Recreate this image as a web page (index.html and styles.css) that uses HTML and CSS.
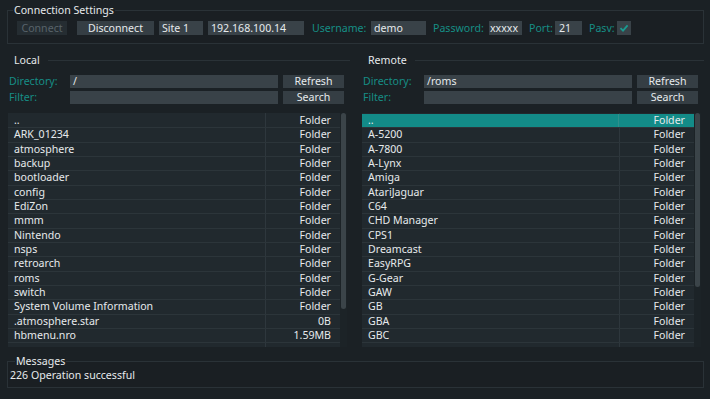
FILE: index.html
```html
<!DOCTYPE html>
<html lang="en">
<head>
    <meta charset="UTF-8">
    <meta name="viewport" content="width=device-width, initial-scale=1.0">
    <title>FTP Client</title>
    <link rel="stylesheet" href="styles.css">
</head>
<body>
    <fieldset class="group conn">
        <legend>Connection Settings</legend>
        <div class="conn-row">
            <button class="btn btn-off w-connect">Connect</button>
            <button class="btn w-disconnect">Disconnect</button>
            <div class="field w-site">Site 1</div>
            <div class="field w-host">192.168.100.14</div>
            <span class="label l-user">Username:</span>
            <div class="field w-user">demo</div>
            <span class="label l-pass">Password:</span>
            <div class="field w-pass">xxxxx</div>
            <span class="label l-port">Port:</span>
            <div class="field w-port">21</div>
            <span class="label l-pasv">Pasv:</span>
            <div class="check">
                <svg width="10" height="10" viewBox="0 0 10 10"><path d="M1.5 5.2 L4 7.6 L8.6 2.4" fill="none" stroke="#1a9a90" stroke-width="1.8"/></svg>
            </div>
        </div>
    </fieldset>

    <div class="panes">
        <div class="pane">
            <div class="pane-title"><span>Local</span></div>
            <div class="path-row">
                <span class="label">Directory:</span>
                <div class="field">/</div>
                <button class="btn">Refresh</button>
            </div>
            <div class="path-row">
                <span class="label">Filter:</span>
                <div class="field"></div>
                <button class="btn">Search</button>
            </div>
            <div class="list">
                <div class="rows" id="localRows"></div>
                <div class="scroll"><div class="grab grab-local"></div></div>
            </div>
        </div>
        <div class="pane">
            <div class="pane-title"><span>Remote</span></div>
            <div class="path-row">
                <span class="label">Directory:</span>
                <div class="field">/roms</div>
                <button class="btn">Refresh</button>
            </div>
            <div class="path-row">
                <span class="label">Filter:</span>
                <div class="field"></div>
                <button class="btn">Search</button>
            </div>
            <div class="list">
                <div class="rows" id="remoteRows"></div>
                <div class="scroll"><div class="grab grab-remote"></div></div>
            </div>
        </div>
    </div>

    <fieldset class="group messages">
        <legend>Messages</legend>
        <div class="msg">226 Operation successful</div>
    </fieldset>

    <script>
        const localFiles = [
            ["..", "Folder"], ["ARK_01234", "Folder"], ["atmosphere", "Folder"], ["backup", "Folder"],
            ["bootloader", "Folder"], ["config", "Folder"], ["EdiZon", "Folder"], ["mmm", "Folder"],
            ["Nintendo", "Folder"], ["nsps", "Folder"], ["retroarch", "Folder"], ["roms", "Folder"],
            ["switch", "Folder"], ["System Volume Information", "Folder"], [".atmosphere.star", "0B"],
            ["hbmenu.nro", "1.59MB"]
        ];
        const remoteFiles = [
            ["..", "Folder"], ["A-5200", "Folder"], ["A-7800", "Folder"], ["A-Lynx", "Folder"],
            ["Amiga", "Folder"], ["AtariJaguar", "Folder"], ["C64", "Folder"], ["CHD Manager", "Folder"],
            ["CPS1", "Folder"], ["Dreamcast", "Folder"], ["EasyRPG", "Folder"], ["G-Gear", "Folder"],
            ["GAW", "Folder"], ["GB", "Folder"], ["GBA", "Folder"], ["GBC", "Folder"]
        ];

        function fillRows(id, files, selected) {
            const box = document.getElementById(id);
            files.forEach((f, i) => {
                const row = document.createElement("div");
                row.classList.add("row");
                if (i === selected) row.classList.add("selected");
                row.innerHTML = `<span class="name">${f[0]}</span><span class="size">${f[1]}</span>`;
                box.appendChild(row);
            });
        }

        fillRows("localRows", localFiles, -1);
        fillRows("remoteRows", remoteFiles, 0);
    </script>
</body>
</html>
```

FILE: styles.css
```css
* {
    box-sizing: border-box;
}
body {
    margin: 0;
    padding: 3px 6px 0 7px;
    width: 710px;
    height: 399px;
    overflow: hidden;
    background: #1b2125;
    color: #e6eaec;
    font-family: 'Noto Sans', 'Open Sans', sans-serif;
    font-size: 10.6px;
    line-height: 14px;
}
.group {
    margin: 0;
    border: 1px solid #2a3237;
    background: #1a1f23;
}
.group legend {
    padding: 0 1px;
    line-height: 14px;
}
.conn {
    padding: 4px 8px 8px 9px;
}
.conn legend {
    margin-left: -4px;
}
.conn-row {
    display: flex;
    align-items: center;
    height: 14px;
}
.btn {
    height: 14px;
    padding: 0;
    border: none;
    background: #353e44;
    color: #e6eaec;
    font: inherit;
    line-height: 14px;
    text-align: center;
}
.btn-off {
    background: #252d32;
    color: #58636a;
}
.field {
    height: 14px;
    padding-left: 3px;
    background: #394248;
    white-space: nowrap;
    overflow: hidden;
}
.label {
    color: #168e85;
    white-space: nowrap;
}
.w-connect { width: 50px; margin-right: 10px; }
.w-disconnect { width: 77px; margin-right: 5px; }
.w-site { width: 44px; margin-right: 5px; }
.w-host { width: 96px; margin-right: 8px; }
.l-user { width: 55px; margin-right: 4px; }
.w-user { width: 55px; margin-right: 7px; }
.l-pass { width: 52px; margin-right: 4px; }
.w-pass { width: 33px; margin-right: 7px; padding-left: 1px; }
.l-port { width: 23px; margin-right: 3px; }
.w-port { width: 27px; margin-right: 7px; padding-left: 4px; }
.l-pasv { width: 25px; margin-right: 3px; }
.check {
    width: 14px;
    height: 14px;
    background: #394248;
    display: flex;
    align-items: center;
    justify-content: center;
}

.panes {
    display: grid;
    grid-template-columns: 342px 342px;
    gap: 12px;
    margin: 9px 0 0 1px;
}
.pane-title {
    display: flex;
    align-items: center;
    height: 14px;
    padding-left: 6px;
}
.pane-title::after {
    content: "";
    flex: 1;
    height: 1px;
    margin-left: 8px;
    background: #2a3237;
}
.path-row {
    display: grid;
    grid-template-columns: 57px 208px 61px;
    column-gap: 5px;
    height: 13px;
    margin-top: 3px;
    line-height: 13px;
}
.pane-title + .path-row {
    margin-top: 8px;
}
.path-row .label {
    padding-left: 1px;
}
.path-row .field,
.path-row .btn {
    height: 13px;
    line-height: 13px;
}
.list {
    display: flex;
    height: 234px;
    margin-top: 9px;
    width: 339px;
}
.rows {
    width: 332px;
    padding-top: 1px;
    background: #21292e linear-gradient(#2e373d, #2e373d) 257px 0 / 1px 100% no-repeat;
}
.row {
    display: flex;
    height: 14.33px;
    line-height: 13px;
    border-bottom: 1px solid #2c353a;
}
.row .name {
    width: 257px;
    padding-left: 6px;
}
.row .size {
    flex: 1;
    padding-right: 9px;
    text-align: right;
}
.row.selected {
    background: #138b88;
}
.row.selected .name {
    border-right: 1px solid #2f8f8c;
}
.scroll {
    width: 7px;
    padding-left: 1px;
    background: #1c2327;
}
.grab {
    width: 5px;
    border-radius: 3px;
    background: #3b4449;
}
.grab-local {
    height: 196px;
}
.grab-remote {
    height: 174px;
}

.messages {
    margin-top: 7px;
    padding: 0 2px 6px 2px;
}
.messages legend {
    margin-left: 5px;
}
.msg {
    margin-top: 1px;
    line-height: 12px;
}
```
